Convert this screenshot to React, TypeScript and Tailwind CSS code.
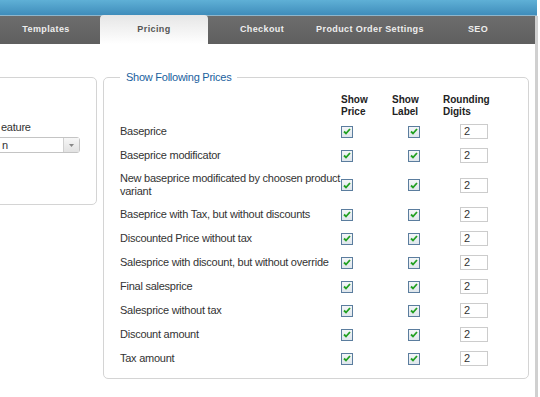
import React from 'react';

const tabs = ['Templates', 'Pricing', 'Checkout', 'Product Order Settings', 'SEO'];

const rows: { label: string; tall?: boolean }[] = [
  { label: 'Baseprice' },
  { label: 'Baseprice modificator' },
  { label: 'New baseprice modificated by choosen product variant', tall: true },
  { label: 'Baseprice with Tax, but without discounts' },
  { label: 'Discounted Price without tax' },
  { label: 'Salesprice with discount, but without override' },
  { label: 'Final salesprice' },
  { label: 'Salesprice without tax' },
  { label: 'Discount amount' },
  { label: 'Tax amount' },
];

function Check() {
  return (
    <span className="flex h-[12px] w-[12px] items-center justify-center border border-[#5b7d9e] bg-gradient-to-b from-[#f4f6f8] to-[#dfe6ec]">
      <svg width="8" height="7" viewBox="0 0 8 7">
        <path d="M1 3.5 L3 5.5 L7 1" fill="none" stroke="#22a022" strokeWidth="1.8" />
      </svg>
    </span>
  );
}

export default function App() {
  return (
    <div className="relative h-[397px] w-[540px] overflow-hidden bg-white font-['Liberation_Sans',Arial,sans-serif] text-[11px] tracking-[-0.25px] text-[#333]">
      {/* top bar */}
      <div className="h-[16px] w-[537px] border-b border-[#8fb6cc] bg-gradient-to-b from-[#5fb0d6] to-[#3f8dbb]" />

      <div className="flex">
        <div className="w-[535px]">
          {/* tabs */}
          <div className="flex h-[28px] bg-gradient-to-b from-[#6d6d6d] to-[#5f5f5f]">
            {tabs.map((t) => (
              <div
                key={t}
                className={
                  t === 'Pricing'
                    ? 'z-10 -mt-[1px] flex h-[29px] w-[108px] items-center justify-center rounded-t-[4px] bg-gradient-to-b from-[#e6e6e6] to-white text-[9px] font-bold tracking-[0.4px] text-[#555]'
                    : 'flex h-[28px] w-[108px] items-center justify-center text-[9px] font-bold tracking-[0.4px] text-[#eee] first:ml-[-8px]'
                }
              >
                {t}
              </div>
            ))}
          </div>

          {/* content */}
          <div className="flex items-start gap-[6px] pt-[25px]">
            {/* left fieldset (cut off) */}
            <div className="-ml-[20px] mt-[8px] h-[128px] w-[117px] rounded-[5px] border border-[#d4d4d4] pl-[20px] pt-[43px]">
              <div className="leading-[13px]">eature</div>
              <div className="-ml-[20px] mt-[3px] flex h-[16px] w-[99px] items-center justify-end rounded-[3px] border border-[#c4c4c4] bg-white pl-[20px]">
                <span className="mr-auto">n</span>
                <span className="flex h-full w-[16px] items-center justify-center border-l border-[#d0d0d0] bg-gradient-to-b from-[#f6f6f6] to-[#e2e2e2]">
                  <svg width="5" height="3" viewBox="0 0 5 3">
                    <path d="M0 0 H5 L2.5 3 Z" fill="#888" />
                  </svg>
                </span>
              </div>
            </div>

            {/* right fieldset */}
            <fieldset className="h-[310px] w-[426px] rounded-[5px] border border-[#d4d4d4] pl-[16px]">
              <legend className="px-[6px] text-[11px] text-[#1a5f9e]">Show Following Prices</legend>

              <div className="grid grid-cols-[221px_51px_51px_70px] pt-[8px]">
                <div />
                <div className="text-[10px] font-bold leading-[12px] tracking-normal text-[#222]">
                  Show
                  <br />
                  Price
                </div>
                <div className="text-[10px] font-bold leading-[12px] tracking-normal text-[#222]">
                  Show
                  <br />
                  Label
                </div>
                <div className="text-[10px] font-bold leading-[12px] tracking-normal text-[#222]">
                  Rounding
                  <br />
                  Digits
                </div>
              </div>

              <div className="mt-[2px]">
                {rows.map((r) => (
                  <div
                    key={r.label}
                    className={`grid grid-cols-[221px_51px_51px_70px] items-center ${r.tall ? 'h-[35px]' : 'h-[24px]'}`}
                  >
                    <div className="-mr-[5px] leading-[13px]">{r.label}</div>
                    <div className="flex">
                      <Check />
                    </div>
                    <div className="flex pl-[16px]">
                      <Check />
                    </div>
                    <div className="pl-[17px]">
                      <div className="flex h-[15px] w-[28px] items-center border border-[#ccc] pl-[3px] text-[11px] text-[#333]">
                        2
                      </div>
                    </div>
                  </div>
                ))}
              </div>
            </fieldset>
          </div>
        </div>
        {/* right edge strip */}
        <div className="h-[400px] w-[3px] bg-[#d0d0d0]" />
      </div>
    </div>
  );
}
